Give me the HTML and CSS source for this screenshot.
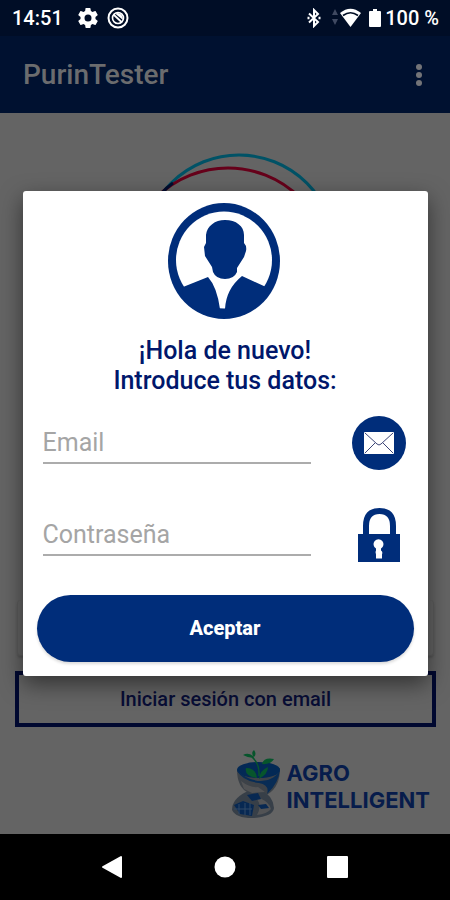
FILE: index.html
```html
<!DOCTYPE html>
<html lang="es">
<head>
<meta charset="utf-8">
<meta name="viewport" content="width=device-width, initial-scale=1">
<title>PurinTester</title>
<link rel="stylesheet" href="styles.css">
</head>
<body>
<div class="screen">
  <div class="status">
    <div class="status-group">
      <span>14:51</span>
      <svg class="gear" width="20" height="20" viewBox="2 2 20 20"><path fill="#fff" d="M19.43 12.98c.04-.32.07-.64.07-.98s-.03-.66-.07-.98l2.11-1.65c.19-.15.24-.42.12-.64l-2-3.46c-.12-.22-.39-.3-.61-.22l-2.49 1c-.52-.4-1.08-.73-1.69-.98l-.38-2.65A.49.49 0 0 0 14 2h-4c-.25 0-.46.18-.49.42l-.38 2.65c-.61.25-1.17.59-1.69.98l-2.49-1c-.23-.09-.49 0-.61.22l-2 3.46c-.13.22-.07.49.12.64l2.11 1.65c-.04.32-.07.65-.07.98s.03.66.07.98l-2.11 1.65c-.19.15-.24.42-.12.64l2 3.46c.12.22.39.3.61.22l2.49-1c.52.4 1.08.73 1.69.98l.38 2.65c.03.24.24.42.49.42h4c.25 0 .46-.18.49-.42l.38-2.65c.61-.25 1.17-.59 1.69-.98l2.49 1c.23.09.49 0 .61-.22l2-3.46c.12-.22.07-.49-.12-.64zM12 15.5a3.5 3.5 0 1 1 0-7 3.5 3.5 0 0 1 0 7z"/></svg>
      <svg width="22" height="22" viewBox="0 0 22 22" fill="none" stroke="#fff"><circle cx="11" cy="11" r="9.5" stroke-width="2"/><circle cx="11" cy="11" r="5.500" stroke-width="1.600"/><path d="M6.500 7.500 15 15.500" stroke-width="1.800"/><path fill="#fff" stroke="none" d="M8 6.500Q15.500 4.500 16 13Z"/></svg>
    </div>
    <div class="status-group status-right">
      <svg width="14" height="20" viewBox="0 0 14 20" fill="none" stroke="#fff" stroke-width="2"><path d="M2 5.500 11 14 7 18V2l4 4-9 8.500"/><path stroke-width="2.400" d="M.5 10h2M11.500 10h2"/></svg>
      <svg class="wifi" width="30" height="20" viewBox="0 0 30 20"><path fill="#3f4961" d="M1 7 4 1l3 6zM1 11h6l-3 6z"/><path fill="#fff" d="M9 5Q19.500-3.500 30 5L19.500 19z"/><path fill="none" stroke="#000d24" stroke-width="1.600" d="M12 7.500Q19.500 2 27 7.500"/></svg>
      <svg class="battery" width="12" height="18" viewBox="0 0 12 18"><path fill="#fff" d="M1 2h3V0h4v2h3q1 0 1 1v14q0 1-1 1H1q-1 0-1-1V3q0-1 1-1z"/></svg>
      <span>100 %</span>
    </div>
  </div>
  <header class="appbar">
    <h1>PurinTester</h1>
    <button class="more" type="button" aria-label="Más opciones"><svg width="8" height="24" viewBox="0 0 8 24" fill="#737478"><circle cx="4" cy="4" r="3"/><circle cx="4" cy="12" r="3"/><circle cx="4" cy="20" r="3"/></svg></button>
  </header>
  <main class="home">
    <svg class="rings" width="210" height="210" viewBox="0 0 210 210" fill="none"><circle cx="112" cy="108" r="96" stroke="#005266" stroke-width="3"/><circle cx="101" cy="127" r="102" stroke="#66001a" stroke-width="3"/><path stroke="#000c2e" stroke-width="3" d="M34 51Q40 44 46 40"/></svg>
    <div class="card"></div>
    <button class="email-login" type="button">Iniciar sesión con email</button>
    <div class="brand">
      <svg width="52" height="70" viewBox="0 0 52 70">
        <path fill="#3d4248" d="M6 19Q6 38 18 43L37 44Q49 37 49 18z"/>
        <path fill="#373f48" d="M1 60Q1 49 15 42L30 41Q42 45 43 58 42 67 21 68 5 68 1 60z"/>
        <path fill="#525355" d="M29 48Q39 53 40 59 36 64 26 65 31 56 26 49zM10 31Q19 38 27 37L34 42 21 43 13 39z"/>
        <ellipse cx="27.500" cy="20" rx="21.500" ry="8" fill="#032955"/>
        <path fill="#082c55" d="M6 20Q17 31 30 31 45 30 49 19 48 33 36 44 39 35 28 33 11 31 6 20z"/>
        <path fill="#072852" d="M3 55 12 51 23 55 21 66 9 64zM27 55 35 54 38 58 30 59zM16 45 27 43 30 49 21 51z"/>
        <path stroke="#304866" stroke-width="1" d="M8 54v10M14 53v12M19 53v12M3 59h18"/>
        <path fill="none" stroke="#07552c" stroke-width="1.500" d="M28 26Q29 14 21 7"/>
        <path fill="#07552c" d="M23 8Q17 8 12 5 17 2 22 6zM22 6Q20 2 23 0 26 4 23 7zM31 14Q33 7 43 9 39 15 31 14zM26 28Q13 26 15 18 25 18 26 28zM28 29Q29 20 37 17 37 24 28 29z"/>
      </svg>
      <div class="brand-name">AGRO<br>INTELLIGENT</div>
    </div>
  </main>
  <nav class="navbar" aria-label="Navegación del sistema">
    <button type="button" aria-label="Atrás"><svg width="24" height="24" viewBox="0 0 24 24"><path fill="#fff" stroke="#fff" stroke-width="2" stroke-linejoin="round" d="M2 12 20 2v20z"/></svg></button>
    <button type="button" aria-label="Inicio"><svg width="24" height="24" viewBox="0 0 24 24"><circle cx="12" cy="12" r="10.500" fill="#fff"/></svg></button>
    <button type="button" aria-label="Recientes"><svg width="24" height="24" viewBox="0 0 24 24"><rect x="2" y="1" width="21" height="22" rx="1" fill="#fff"/></svg></button>
  </nav>
  <div class="overlay">
    <form class="dialog" role="dialog" aria-labelledby="dialog-title">
      <svg class="avatar" width="114" height="116" viewBox="0 0 114 116"><ellipse cx="56" cy="58" rx="56" ry="58" fill="#002d7a"/><ellipse cx="56" cy="57" rx="48" ry="48.500" fill="#fff"/><path fill="#002d7a" d="M57 17C68 17 76 23 76 32V40Q79 43 78 48L76 54 69 65V69Q66 76 57 76 48 76 45 69L44 64 37 53 36 44 38 40V32C39 23 47 17 57 17zM15 84 40 74Q49 84 52 106H57Q58 86 74 73L98 84 95 96Q80 114 57 114 30 114 14 90z"/></svg>
      <h2 id="dialog-title">¡Hola de nuevo!<br>Introduce tus datos:</h2>
      <div class="field">
        <input type="email" aria-label="Email" placeholder="Email">
        <svg width="56" height="56" viewBox="0 0 56 56"><circle cx="27" cy="28" r="27" fill="#002d7a"/><rect x="12" y="17" width="30" height="22" rx="1" fill="#fff"/><path fill="none" stroke="#3c4577" stroke-width="1" d="M13 18 25 29Q27 31 29 29L41 18M13 38 23 28M41 38 31 28"/></svg>
      </div>
      <div class="field">
        <input type="password" aria-label="Contraseña" placeholder="Contraseña">
        <svg width="56" height="56" viewBox="0 0 56 56"><path fill="none" stroke="#002d7a" stroke-width="6" d="M14 29V19Q14 4 27.500 4 41 4 41 19V29"/><path fill="#002d7a" d="M6 27H48V55H6z"/><path fill="#fff" d="M24 41.500a5 5 0 1 1 5 0v2q2 1 1 4v4h-6v-4q-1-3 0-4z"/></svg>
      </div>
      <button class="accept" type="button">Aceptar</button>
    </form>
  </div>
</div>
</body>
</html>
```
FILE: styles.css
```css
* { box-sizing: border-box; }
body { margin: 0; font-family: Roboto, "Liberation Sans", sans-serif; background: #646464; }
h1, h2 { margin: 0; font-weight: 500; }
button { font: inherit; border: 0; padding: 0; background: none; }
svg { display: block; flex: none; }

.screen { position: relative; display: flex; flex-direction: column; min-height: 100vh; }

.status { display: flex; justify-content: space-between; align-items: center; height: 36px; padding: 0 11px 0 12px; background: #000d26; color: #fff; font-size: 20px; font-weight: 500; }
.status-group { display: flex; align-items: center; gap: 9px; }
.status-right { gap: 4px; }
.gear { margin-left: 6px; }
.wifi { margin-left: 6px; }
.battery { margin-left: 4px; }

.appbar { display: flex; justify-content: space-between; align-items: center; height: 77px; padding: 0 27px 0 23px; background: #001130; color: #6b6c6e; }
.appbar h1 { font-size: 28px; }

.home { flex: 1; display: flex; flex-direction: column; padding: 30px 14px 14px 15px; }
.rings { align-self: center; margin-left: 12px; }
.card { height: 56px; margin: auto 2px 0; border: 1px solid #5c5c5c; border-top: 0; border-radius: 4px; box-shadow: 0 2px 2px #555; }
.email-login { height: 56px; margin-top: 15px; border: 4px solid #000830; color: #080d35; font-size: 20px; font-weight: 500; }
.brand { display: flex; align-self: flex-end; align-items: center; gap: 4px; margin-top: 23px; padding-right: 6px; }
.brand-name { padding-top: 4px; color: #071c4b; font-family: Inter, sans-serif; font-size: 22px; font-weight: 700; line-height: 27px; }

.navbar { display: flex; justify-content: center; align-items: center; gap: 88px; height: 66px; background: #000; }

.overlay { position: absolute; inset: 0; display: flex; justify-content: center; align-items: center; padding-bottom: 34px; }
.dialog { display: flex; flex-direction: column; width: 90%; padding: 12px 14px 14px; border-radius: 3px; background: #fff; box-shadow: 0 8px 22px rgba(0, 0, 0, 0.5); }
.avatar { align-self: center; }
.dialog h2 { margin: 17px 0 19px; color: #00176b; font-size: 25px; line-height: 30px; text-align: center; }
.field { display: flex; justify-content: space-between; align-items: center; height: 56px; margin-bottom: 36px; padding: 0 6px; }
.field input { width: 268px; height: 42px; padding: 2px 0 0; border: 0; border-bottom: 2px solid #acacac; border-radius: 0; background: none; color: #333; font: inherit; font-size: 25px; }
.field input::placeholder { color: #a5a5a5; opacity: 1; }
.accept { height: 67px; border-radius: 34px; background: #002d7a; box-shadow: 0 2px 3px rgba(0, 0, 0, 0.15); color: #fff; font-size: 20px; font-weight: 800; }
.field + .accept { margin-top: -4px; }
```
